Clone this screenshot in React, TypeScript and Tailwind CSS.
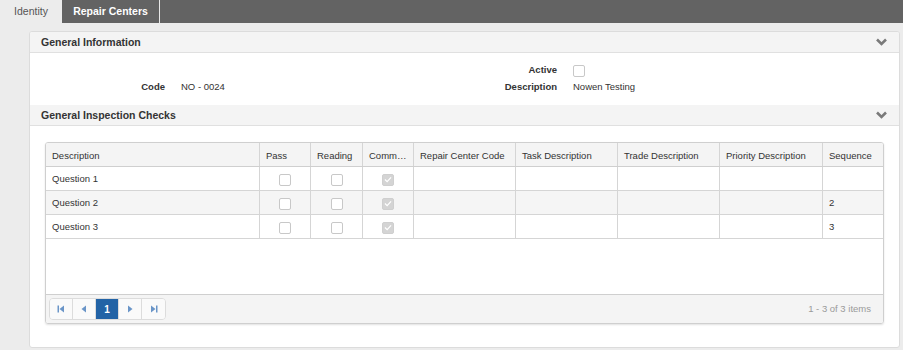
import React from "react";

const cols = [
  { label: "Description", w: "w-[214px]" },
  { label: "Pass", w: "w-[51px]" },
  { label: "Reading", w: "w-[52px]" },
  { label: "Comm…", w: "w-[51px]" },
  { label: "Repair Center Code", w: "w-[102px]" },
  { label: "Task Description", w: "w-[102px]" },
  { label: "Trade Description", w: "w-[102px]" },
  { label: "Priority Description", w: "w-[103px]" },
  { label: "Sequence", w: "flex-1" },
];

const rows = [
  { q: "Question 1", seq: "" },
  { q: "Question 2", seq: "2" },
  { q: "Question 3", seq: "3" },
];

function Chevron() {
  return (
    <svg width="11" height="8" viewBox="0 0 11 8" className="text-[#7a7a7a]">
      <path d="M1 1.5 L5.5 6 L10 1.5" fill="none" stroke="currentColor" strokeWidth="2.6" />
    </svg>
  );
}

function Box({ checked = false }: { checked?: boolean }) {
  return checked ? (
    <span className="flex w-[12px] h-[12px] rounded-[2px] bg-[#d4d4d4] border border-[#cfcfcf] items-center justify-center">
      <svg width="8" height="7" viewBox="0 0 9 8">
        <path d="M1 4 L3.5 6.5 L8 1.5" fill="none" stroke="#fff" strokeWidth="1.4" />
      </svg>
    </span>
  ) : (
    <span className="block w-[12px] h-[12px] rounded-[2px] bg-white border border-[#c8c8c8]" />
  );
}

function SectionHeader({ title }: { title: string }) {
  return (
    <div className="h-[21px] bg-[#f4f4f4] border-b border-[#e0e0e0] flex items-center justify-between pl-[11px] pr-[12px]">
      <span className="font-bold text-[10.5px] text-[#333] pt-[1px]">{title}</span>
      <Chevron />
    </div>
  );
}

function PagerBtn({ children, active = false }: { children: React.ReactNode; active?: boolean }) {
  return (
    <div
      className={
        "w-[23px] h-full flex items-center justify-center border-r border-[#dcdcdc] last:border-r-0 " +
        (active ? "bg-[#2263a6] text-white text-[10px] font-bold" : "bg-[#fafafa] text-[#6a95c8]")
      }
    >
      {children}
    </div>
  );
}

export default function App() {
  return (
    <div className="w-[903px] h-[350px] bg-[#ececec] font-['Liberation_Sans',Arial,sans-serif] overflow-hidden">
      <div className="h-[23px] bg-[#636363] flex">
        <div className="w-[62px] h-full bg-[#ececec] flex items-center justify-center text-[10.5px] text-[#555]">
          Identity
        </div>
        <div className="w-[98px] h-full flex items-center justify-center text-[10.5px] font-bold text-white border-r border-[#e8e8e8]">
          Repair Centers
        </div>
      </div>

      <div className="ml-[29px] mr-[3px] mt-[8px] h-[317px] bg-white border border-[#dcdcdc] rounded-[3px] overflow-hidden">
        <SectionHeader title="General Information" />
        <div className="h-[52px] pt-[9px] text-[9.5px] text-[#333]">
          <div className="flex h-[17px] items-center">
            <div className="w-[527px] text-right font-bold">Active</div>
            <div className="ml-[16px]">
              <Box />
            </div>
          </div>
          <div className="flex h-[17px] items-center">
            <div className="w-[135px] text-right font-bold">Code</div>
            <div className="ml-[16px] w-[236px]">NO - 0024</div>
            <div className="w-[140px] text-right font-bold">Description</div>
            <div className="ml-[16px]">Nowen Testing</div>
          </div>
        </div>
        <SectionHeader title="General Inspection Checks" />

        <div className="mt-[16px] ml-[15px] w-[839px] h-[182px] border border-[#cfcfcf] rounded-[3px] flex flex-col text-[9.5px] text-[#333] shadow-[0_1px_2px_rgba(0,0,0,0.12)] overflow-hidden">
          <div className="flex h-[24px] bg-[#f4f4f4] border-b border-[#cfcfcf]">
            {cols.map((c, i) => (
              <div
                key={c.label}
                className={
                  c.w +
                  " flex items-center pl-[6px] pt-[3px] whitespace-nowrap " +
                  (i < cols.length - 1 ? "border-r border-[#d5d5d5]" : "")
                }
              >
                {c.label}
              </div>
            ))}
          </div>
          {rows.map((r, ri) => (
            <div
              key={r.q}
              className={"flex h-[24px] border-b border-[#d5d5d5] " + (ri === 1 ? "bg-[#f5f5f5]" : "bg-white")}
            >
              {cols.map((c, i) => {
                const border = i < cols.length - 1 ? " border-r border-[#d5d5d5]" : "";
                if (i >= 1 && i <= 3)
                  return (
                    <div key={c.label} className={c.w + " flex items-center justify-center pt-[2px]" + border}>
                      <Box checked={i === 3} />
                    </div>
                  );
                return (
                  <div key={c.label} className={c.w + " flex items-center pl-[6px] pt-[2px]" + border}>
                    {i === 0 ? r.q : i === 8 ? r.seq : ""}
                  </div>
                );
              })}
            </div>
          ))}
          <div className="flex-1 bg-white" />
          <div className="h-[29px] bg-[#f4f4f4] border-t border-[#cfcfcf] flex items-center justify-between pl-[3px] pr-[12px]">
            <div className="h-[22px] flex border border-[#dcdcdc] rounded-[4px] overflow-hidden">
              <PagerBtn>
                <svg width="8" height="8" viewBox="0 0 8 8">
                  <rect x="0.5" y="0.5" width="1.5" height="7" fill="currentColor" />
                  <path d="M7 0.5 L2.5 4 L7 7.5 Z" fill="currentColor" />
                </svg>
              </PagerBtn>
              <PagerBtn>
                <svg width="6" height="8" viewBox="0 0 6 8">
                  <path d="M5 0.5 L0.5 4 L5 7.5 Z" fill="currentColor" />
                </svg>
              </PagerBtn>
              <PagerBtn active>1</PagerBtn>
              <PagerBtn>
                <svg width="6" height="8" viewBox="0 0 6 8">
                  <path d="M1 0.5 L5.5 4 L1 7.5 Z" fill="currentColor" />
                </svg>
              </PagerBtn>
              <PagerBtn>
                <svg width="8" height="8" viewBox="0 0 8 8">
                  <path d="M1 0.5 L5.5 4 L1 7.5 Z" fill="currentColor" />
                  <rect x="6" y="0.5" width="1.5" height="7" fill="currentColor" />
                </svg>
              </PagerBtn>
            </div>
            <span className="text-[#9a9a9a]">1 - 3 of 3 items</span>
          </div>
        </div>
      </div>
    </div>
  );
}
